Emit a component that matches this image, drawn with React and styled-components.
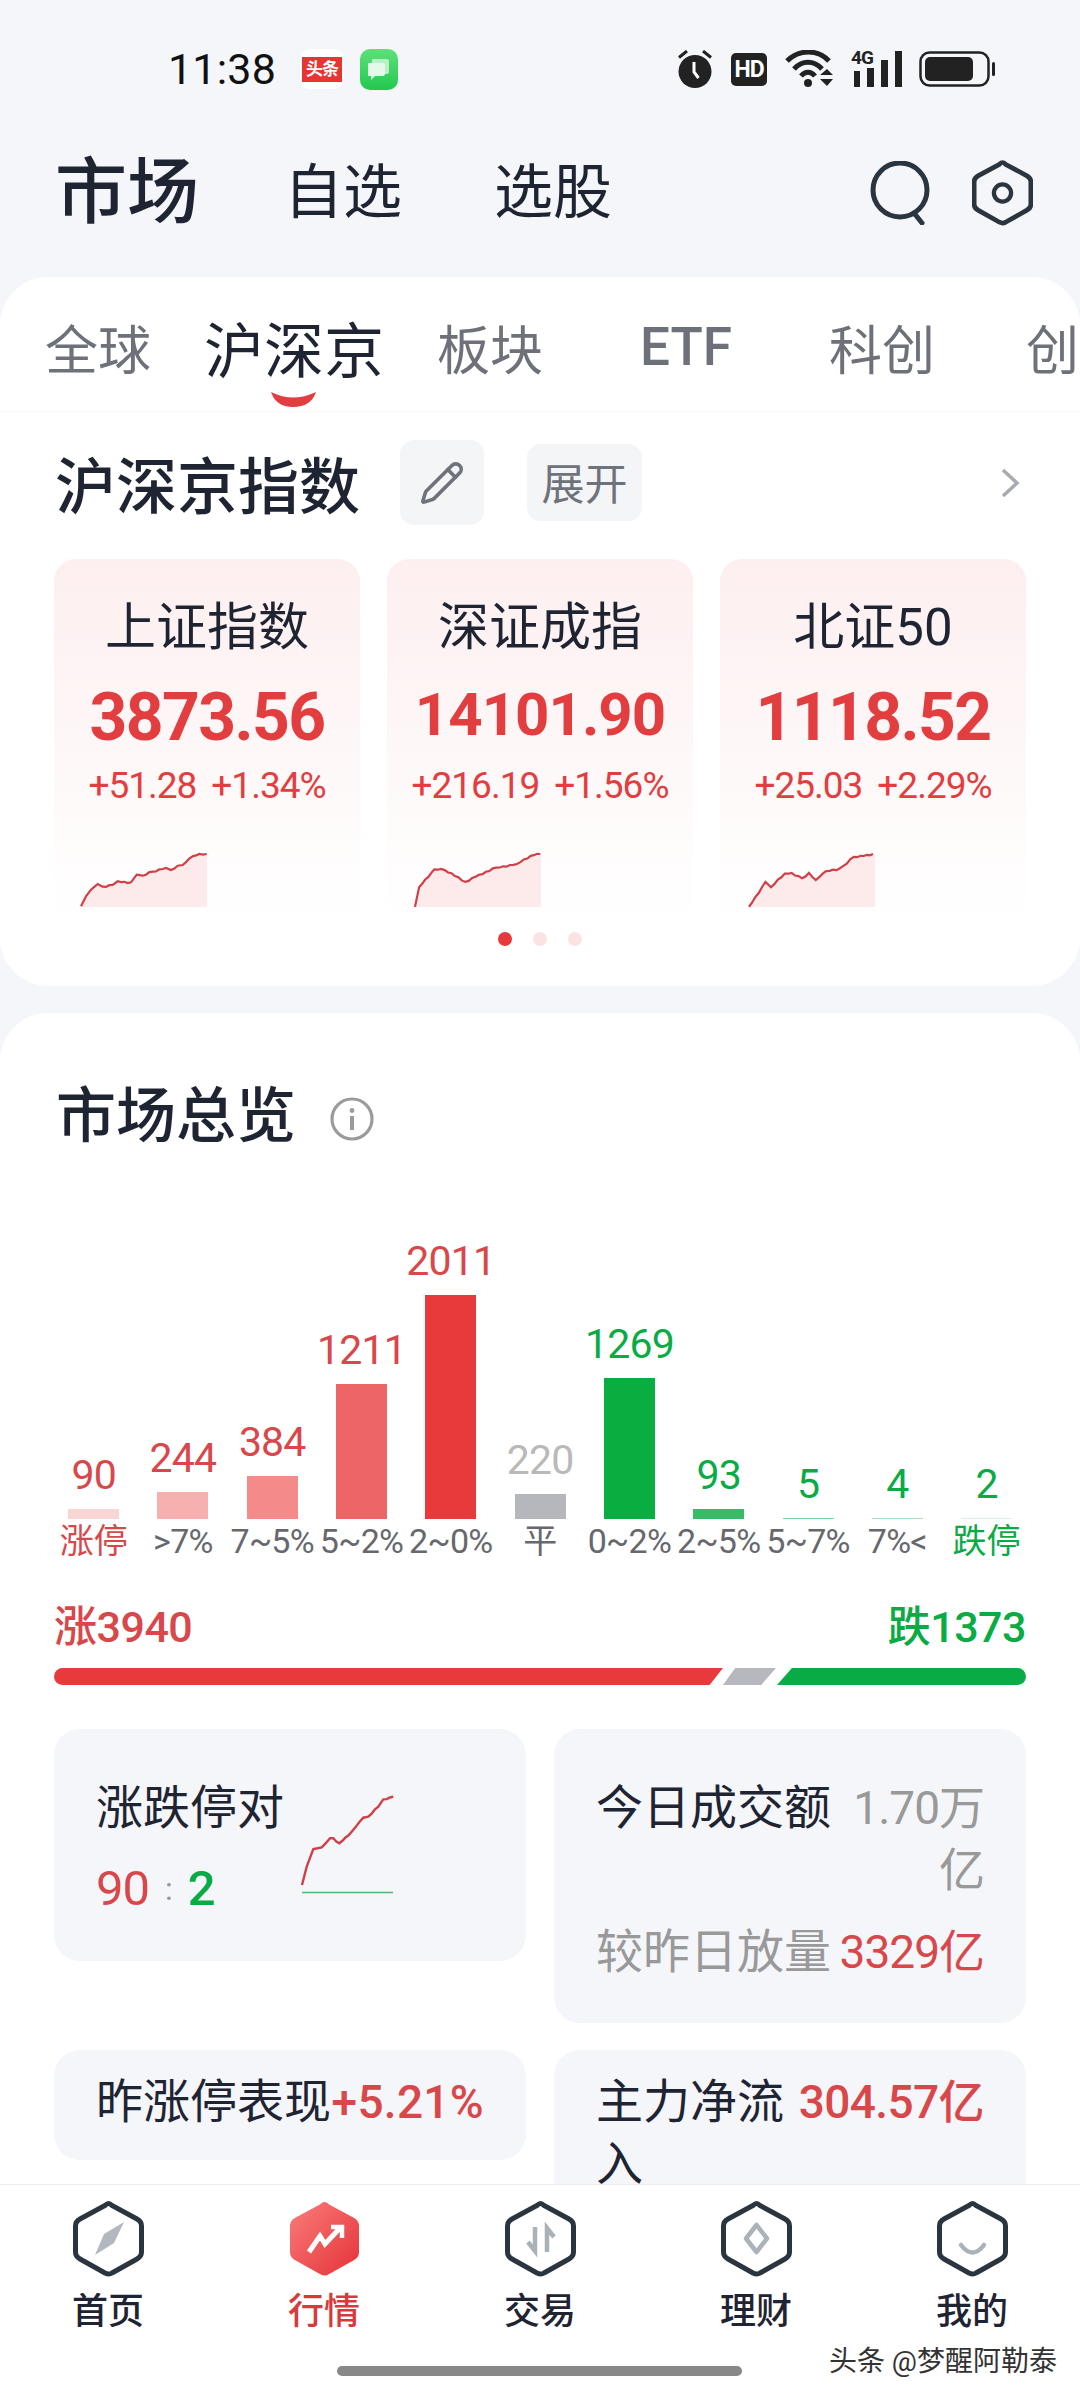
import React from "react";
import styled, { createGlobalStyle } from "styled-components";
import { Pencil } from "lucide-react";

const INK = "#1f2433";
const RED = "#e23d3f";
const GREEN = "#09ab45";
const SANS = `Roboto, "Noto Sans CJK SC", sans-serif`;

const Global = createGlobalStyle`
  html, body { margin: 0; padding: 0; background: #f4f6fa; }
  * { box-sizing: border-box; }
  body { font-family: ${SANS}; color: ${INK}; }
`;

const Page = styled.div`
  width: 1080px; height: 2400px; overflow: hidden; position: relative;
  background: #f4f6fa; display: flex; flex-direction: column;
`;

/* status bar */
const StatusBar = styled.div`
  height: 120px; padding: 18px 84px 0 168px; display: flex; align-items: center; flex-shrink: 0;
`;
const Clock = styled.span`
  font-size: 43px; line-height: 48px; color: #111; width: 107px; letter-spacing: 0.2px; white-space: nowrap;
`;
const TtBadge = styled.div`
  width: 44px; height: 40px; margin-left: 25px; background: #fff; border-radius: 10px;
  display: flex; align-items: center; justify-content: center;
`;
const TtText = styled.span`
  width: 40px; height: 25px; background: #e53535; color: #fff; font-size: 17px; line-height: 25px;
  font-weight: 700; text-align: center; letter-spacing: -1px; white-space: nowrap;
`;
const ChatBadge = styled.div`
  width: 38px; height: 41px; margin-left: 16px; border-radius: 10px;
  background: linear-gradient(180deg, #5fe07a, #22c84f);
  display: flex; align-items: center; justify-content: center;
`;
const StatusRight = styled.div`
  margin-left: auto; display: flex; align-items: center;
`;
const HdBox = styled.span`
  width: 36px; height: 33px; margin-left: 19px; background: #222; border-radius: 5px; color: #fff;
  font-size: 23px; line-height: 33px; font-weight: 700; text-align: center; letter-spacing: -1px;
`;
const SignalWrap = styled.div`
  position: relative; width: 52px; height: 36px; margin-left: 17px;
`;
const FourG = styled.span`
  position: absolute; left: 0; top: -4px; font-size: 19px; line-height: 22px; font-weight: 700; color: #222; letter-spacing: -1px;
`;
const BatteryIcon = styled.svg`
  margin-left: 16px; display: block;
`;
const WifiIcon = styled.svg`
  margin-left: 18px; display: block;
`;

/* header */
const Header = styled.div`
  height: 157px; padding: 0 47px 12px 55px; display: flex; align-items: center; flex-shrink: 0;
`;
const BrandTitle = styled.span`
  font-size: 72px; line-height: 80px; font-weight: 500; color: ${INK}; white-space: nowrap;
`;
const HeadLink = styled.span`
  font-size: 59px; line-height: 80px; color: ${INK}; white-space: nowrap; margin-left: ${(p) => p.$gap}px;
`;
const HeadIcons = styled.div`
  margin-left: auto; display: flex; align-items: center; gap: 40px;
`;

/* sheets */
const MarketSheet = styled.section`
  height: 709px; flex-shrink: 0; background: #fff; border-radius: 48px; overflow: hidden;
`;
const OverviewSheet = styled.section`
  flex: 1; min-height: 0; margin-top: 27px; background: #fff; border-radius: 48px 48px 0 0; overflow: hidden;
`;

/* tabs */
const Tabs = styled.div`
  height: 135px; padding-top: 5px; display: flex; overflow: hidden;
  border-bottom: 1px solid #fafafb;
`;
const Tab = styled.div`
  position: relative; width: 196px; flex-shrink: 0; display: flex; align-items: center;
  justify-content: ${(p) => (p.$lead ? "flex-start" : "center")};
  padding-left: ${(p) => (p.$lead ? 46 : 0)}px;
  font-size: ${(p) => (p.$active ? 60 : 53)}px;
  color: ${(p) => (p.$active ? INK : "#6e7179")};
  white-space: nowrap; font-weight: ${(p) => (p.$bold ? 500 : 400)};
`;
const Smile = styled.svg`
  position: absolute; left: 75px; bottom: 4px; display: block;
`;

/* section head */
const SectionHead = styled.div`
  margin-top: 28px; height: 85px; padding: 0 60px 0 55px; display: flex; align-items: flex-start;
`;
const SectionTitle = styled.h2`
  margin: 0; font-size: 61px; line-height: 97px; height: 85px; font-weight: 500; color: ${INK}; white-space: nowrap;
`;
const EditButton = styled.button`
  width: 84px; height: 85px; margin-left: 40px; border: 0; padding: 0; border-radius: 14px; background: #f4f5f7;
  display: flex; align-items: center; justify-content: center; color: #6e727a;
`;
const ExpandButton = styled.button`
  width: 115px; height: 77px; margin: 4px 0 0 43px; border: 0; padding: 0; border-radius: 14px; background: #f4f5f7;
  font-family: ${SANS}; font-size: 43px; line-height: 83px; color: #6e727a;
`;
const ChevronBox = styled.svg`
  margin: 28px 0 0 auto; display: block;
`;

/* index cards */
const CardRow = styled.div`
  margin-top: 34px; padding: 0 54px; display: grid; grid-template-columns: repeat(3, 306px); column-gap: 27px;
`;
const IndexCard = styled.div`
  height: 361px; border-radius: 22px 22px 0 0; display: flex; flex-direction: column; align-items: center;
  background: linear-gradient(180deg, #fdeff0 0%, #fef7f7 50%, #ffffff 100%);
`;
const IndexName = styled.div`
  margin-top: 39px; font-size: 51px; line-height: 60px; color: ${INK}; white-space: nowrap;
`;
const IndexValue = styled.div`
  margin-top: ${(p) => (p.$small ? 17 : 20)}px; font-size: ${(p) => (p.$small ? 60 : 66)}px; line-height: 80px; font-weight: 700; color: ${RED}; white-space: nowrap;
  letter-spacing: ${(p) => (p.$small ? -1 : -1.6)}px;
  margin-bottom: ${(p) => (p.$small ? 3 : 0)}px;
`;
const IndexChange = styled.div`
  margin-top: 6px; display: flex; gap: 15px; font-size: 37px; line-height: 44px; color: ${RED}; white-space: nowrap;
  letter-spacing: -1px;
`;
const Spark = styled.svg`
  display: block; align-self: flex-start; margin: 46px 0 0 ${(p) => p.$left}px; overflow: visible;
`;
const Dots = styled.div`
  margin-top: 12px; display: flex; justify-content: center; gap: 21px;
`;
const Dot = styled.span`
  width: 14px; height: 14px; border-radius: 50%; background: ${(p) => (p.$on ? "#e5393b" : "#fbe3e3")};
`;

/* overview */
const OverviewHead = styled.div`
  margin-top: 74px; height: 60px; padding-left: 56px; display: flex; align-items: center;
`;
const OverviewTitle = styled.h2`
  margin: 0; font-size: 60px; line-height: 60px; font-weight: 500; color: ${INK}; white-space: nowrap;
`;
const InfoIcon = styled.svg`
  margin: 4px 0 0 34px; display: block;
`;
const Chart = styled.div`
  padding-left: 49px; display: grid; grid-template-columns: repeat(11, 89.3px);
`;
const ChartCol = styled.div`
  display: flex; flex-direction: column; align-items: center;
`;
const BarArea = styled.div`
  height: 372px; display: flex; flex-direction: column; justify-content: flex-end; align-items: center;
`;
const BarValue = styled.span`
  font-size: 41px; line-height: 40px; margin-bottom: 14px; color: ${(p) => p.$c}; white-space: nowrap; letter-spacing: -0.8px;
`;
const Bar = styled.div`
  width: 51px; height: ${(p) => p.$h}px; background: ${(p) => p.$c};
`;
const BarLabel = styled.span`
  font-size: ${(p) => (p.$cjk ? 34 : 34)}px; line-height: 44px; color: ${(p) => p.$c}; white-space: nowrap; letter-spacing: ${(p) => (p.$cjk ? 0 : -0.7)}px;
`;
const Totals = styled.div`
  margin-top: 39px; padding: 0 54px; height: 50px; display: flex; justify-content: space-between;
`;
const TotalText = styled.span`
  font-size: 43px; line-height: 50px; font-weight: 500; color: ${(p) => p.$c}; letter-spacing: -0.5px;
`;
const Stack = styled.div`
  margin: 16px 54px 0; height: 17px; display: flex;
`;
const StackRed = styled.div`
  width: 669px; background: #e83a3c; border-radius: 9px 0 0 9px;
  clip-path: polygon(0 0, 100% 0, 98% 100%, 0 100%);
`;
const StackGray = styled.div`
  width: 53px; background: #b6b8be; margin-left: 0;
  clip-path: polygon(23% 0, 100% 0, 72% 100%, 0 100%);
`;
const StackGreen = styled.div`
  flex: 1; background: ${GREEN}; border-radius: 0 9px 9px 0; margin-left: 1px;
  clip-path: polygon(6% 0, 100% 0, 100% 100%, 0 100%);
`;
const TileGrid = styled.div`
  margin-top: 44px; padding: 0 55px 0 54px; display: grid; grid-template-columns: 472px 472px;
  column-gap: 28px; row-gap: 27px; align-items: start;
`;
const Tile = styled.div`
  background: #f4f6fa; border-radius: 26px; padding: ${(p) => p.$pad || "48px 42px 40px"};
`;
const TileSplit = styled.div`
  display: flex; align-items: flex-start;
`;
const TileCol = styled.div`
  width: 206px; flex-shrink: 0;
`;
const TileRow = styled.div`
  display: flex; margin-top: ${(p) => p.$mt || 0}px; justify-content: space-between;
`;
const TileLabel = styled.span`
  font-size: 47px; line-height: 62px; color: ${(p) => p.$c || INK}; flex-shrink: ${(p) => (p.$wrap ? 1 : 0)}; white-space: ${(p) => (p.$wrap ? "normal" : "nowrap")};
`;
const TileValue = styled.span`
  font-size: 46px; line-height: 62px; color: ${(p) => p.$c}; text-align: right; letter-spacing: ${(p) => p.$ls ?? -1}px;
  font-weight: ${(p) => p.$w || 400}; flex: ${(p) => (p.$nowrap ? "0 0 auto" : "1 1 0")}; white-space: ${(p) => (p.$nowrap ? "nowrap" : "normal")};
  min-width: 0;
`;
const Ratio = styled.div`
  margin-top: 19px; display: flex; align-items: center; height: 62px; font-size: 49px; line-height: 62px; letter-spacing: -1px;
`;
const RatioPart = styled.span`
  color: ${(p) => p.$c}; font-size: ${(p) => p.$s || 49}px; margin: 0 ${(p) => p.$m || 0}px; font-weight: ${(p) => p.$w || 400};
`;
const RatioSpark = styled.svg`
  display: block; margin-top: 18px; overflow: visible;
`;

/* nav */
const Nav = styled.nav`
  height: 216px; flex-shrink: 0; background: #fff; border-top: 1px solid #ececec; padding-top: 15px;
`;
const NavGrid = styled.div`
  display: grid; grid-template-columns: repeat(5, 216px);
`;
const NavItem = styled.div`
  display: flex; flex-direction: column; align-items: center;
`;
const NavLabel = styled.span`
  margin-top: 12px; font-size: 36px; line-height: 44px; font-weight: 500; color: ${(p) => (p.$active ? "#d8393c" : INK)}; white-space: nowrap;
`;
const HomeBar = styled.div`
  width: 405px; height: 10px; margin: 32px 0 0 337px; background: #888; border-radius: 5px;
`;
const Watermark = styled.span`
  position: absolute; right: 23px; bottom: 20px; font-size: 28px; line-height: 36px; color: #333; white-space: nowrap;
`;

const HEX = "M35.5 3.5Q37 3.5 39 5.5L64 19Q68.5 21.5 68.5 26V52Q68.5 56.5 64 59L39 73Q36 75 32 73L7 59Q2.5 56.5 2.5 52V26Q2.5 21.5 7 19L32 5.5Q34 3.5 35.5 3.5Z";

const NavHex = ({ children, filled }) => (
  <svg width="71" height="78" viewBox="0 0 71 78" style={{ display: "block" }}>
    <defs>
      <linearGradient id="hexfill" x1="0" y1="0" x2="1" y2="1">
        <stop offset="0" stopColor="#fa7b7b" />
        <stop offset="1" stopColor="#e53438" />
      </linearGradient>
    </defs>
    {filled ? <path d={HEX} fill="url(#hexfill)" stroke="url(#hexfill)" strokeWidth="3" /> : <path d={HEX} fill="none" stroke="#2b3540" strokeWidth="5" />}
    {children}
  </svg>
);

/* maps read-off trace points to chart space and adds fine tick-level wiggle */
const mapPts = (raw, x0, y0, sx, sy, wiggle = 0.9) => {
  const out = [];
  raw.forEach(([x, y], i) => {
    const px = (x - x0) / sx;
    const py = (y - y0) / sy;
    if (i > 0) {
      const [qx, qy] = raw[i - 1];
      const ax = (qx - x0) / sx;
      const ay = (qy - y0) / sy;
      const n = Math.max(1, Math.floor((px - ax) / 3));
      for (let k = 1; k < n; k++) {
        const t = k / n;
        const j = (k % 2 ? 1 : -1) * wiggle * (0.5 + 0.5 * Math.sin(k * 2.3 + i));
        out.push(`${(ax + (px - ax) * t).toFixed(1)},${(ay + (py - ay) * t + j).toFixed(1)}`);
      }
    }
    out.push(`${px.toFixed(1)},${py.toFixed(1)}`);
  });
  return out.join(" ");
};

const SPARKS = [
  { left: 27, pts: mapPts([[95,322],[110,292],[125,272],[145,255],[160,263],[190,258],[205,247],[245,250],[262,227],[280,230],[310,218],[350,207],[365,213],[385,200],[400,198],[430,172],[450,165],[472,165]], 95, 165, 3, 3) },
  { left: 28, pts: mapPts([[602,1365],[608,1310],[630,1260],[645,1262],[675,1295],[695,1275],[720,1255],[750,1245],[770,1222],[784,1217]], 602, 1217, 1.452, 2.8) },
  { left: 29, pts: mapPts([[1088,1365],[1112,1295],[1120,1310],[1140,1272],[1150,1270],[1165,1285],[1175,1270],[1185,1290],[1200,1265],[1215,1262],[1225,1250],[1240,1225],[1250,1222],[1268,1217]], 1088, 1217, 1.452, 2.8) },
];

const CARDS = [
  { name: "上证指数", value: "3873.56", a: "+51.28", b: "+1.34%" },
  { name: "深证成指", value: "14101.90", a: "+216.19", b: "+1.56%", small: true },
  { name: "北证50", value: "1118.52", a: "+25.03", b: "+2.29%" },
];

const VRED = "#d8474a";
const GRAY = "#66686e";
const COLS = [
  { v: "90", l: "涨停", h: 10, c: "#f8d6d6", vc: VRED, lc: VRED, cjk: true },
  { v: "244", l: ">7%", h: 27, c: "#f7b0b0", vc: VRED, lc: GRAY },
  { v: "384", l: "7~5%", h: 43, c: "#f58a8a", vc: VRED, lc: GRAY },
  { v: "1211", l: "5~2%", h: 135, c: "#ee6565", vc: VRED, lc: GRAY },
  { v: "2011", l: "2~0%", h: 224, c: "#e93a3b", vc: VRED, lc: GRAY },
  { v: "220", l: "平", h: 25, c: "#b5b7bd", vc: "#b9b9b9", lc: GRAY, cjk: true },
  { v: "1269", l: "0~2%", h: 141, c: "#09ad40", vc: GREEN, lc: GRAY },
  { v: "93", l: "2~5%", h: 10, c: "#38bb66", vc: GREEN, lc: GRAY },
  { v: "5", l: "5~7%", h: 1, c: "#7fd4a0", vc: GREEN, lc: GRAY },
  { v: "4", l: "7%<", h: 1, c: "#a6e0bd", vc: GREEN, lc: GRAY },
  { v: "2", l: "跌停", h: 1, c: "#d8f2e2", vc: GREEN, lc: GREEN, cjk: true },
];

const TABS = [
  { t: "全球" }, { t: "沪深京", active: true }, { t: "板块" }, { t: "ETF", bold: true }, { t: "科创" }, { t: "创", lead: true },
];

export default function App() {
  return (
    <Page>
      <Global />
      <StatusBar>
        <Clock>11:38</Clock>
        <TtBadge><TtText>头条</TtText></TtBadge>
        <ChatBadge>
          <svg width="26" height="26" viewBox="0 0 26 26">
            <path d="M6 3h15a2 2 0 0 1 2 2v11a2 2 0 0 1-2 2H6z" fill="#b9f0c4" />
            <path d="M3 7h14a2 2 0 0 1 2 2v9a2 2 0 0 1-2 2H9l-4 4v-4H3a1 1 0 0 1-1-1V8a1 1 0 0 1 1-1z" fill="#e4f9e8" />
          </svg>
        </ChatBadge>
        <StatusRight>
          <svg width="34" height="38" viewBox="0 0 34 38" style={{ display: "block" }}>
            <circle cx="17" cy="21.5" r="16.5" fill="#222" />
            <path d="M16 12v10l4.5 6" fill="none" stroke="#fff" strokeWidth="3" />
            <path d="M1 7.5 9 1M33 7.5 25 1" stroke="#222" strokeWidth="3" fill="none" />
          </svg>
          <HdBox>HD</HdBox>
          <WifiIcon width="49" height="38" viewBox="0 0 49 38">
            <path d="M2 11C14 -1 33 -1 44 11" fill="none" stroke="#222" strokeWidth="5" />
            <path d="M9 19C17 10 29 10 37 19" fill="none" stroke="#222" strokeWidth="5" />
            <path d="M16 26C20 21 26 21 30 26" fill="none" stroke="#222" strokeWidth="5" />
            <circle cx="23" cy="33" r="4" fill="#222" />
            <path d="M35 25 42 19 48 25zM35 29 48 29 42 36z" fill="#222" />
          </WifiIcon>
          <SignalWrap>
            <FourG>4G</FourG>
            <svg width="52" height="36" viewBox="0 0 52 36" style={{ display: "block" }}>
              <rect x="3" y="20" width="6" height="16" fill="#222" />
              <rect x="16" y="17" width="7" height="19" fill="#222" />
              <rect x="30" y="9" width="7" height="27" fill="#222" />
              <rect x="44" y="0" width="7" height="36" fill="#222" />
            </svg>
          </SignalWrap>
          <BatteryIcon width="77" height="36" viewBox="0 0 77 36">
            <rect x="1.5" y="1.5" width="68" height="33" rx="9" fill="none" stroke="#222" strokeWidth="2.5" />
            <rect x="6" y="6" width="48" height="24" rx="5" fill="#222" />
            <rect x="73" y="11" width="3" height="14" rx="1.5" fill="#222" />
          </BatteryIcon>
        </StatusRight>
      </StatusBar>

      <Header>
        <BrandTitle>市场</BrandTitle>
        <HeadLink $gap={85}>自选</HeadLink>
        <HeadLink $gap={92}>选股</HeadLink>
        <HeadIcons>
          <svg width="62" height="64" viewBox="0 0 62 64" style={{ display: "block" }}>
            <ellipse cx="30" cy="29" rx="27" ry="27" fill="none" stroke="#2b3540" strokeWidth="5" />
            <path d="M44 52 52 62" fill="none" stroke="#2b3540" strokeWidth="5" strokeLinecap="round" />
          </svg>
          <svg width="61" height="68" viewBox="0 0 71 78" style={{ display: "block" }}>
            <path d={HEX} fill="none" stroke="#2b3540" strokeWidth="5.5" />
            <circle cx="35.5" cy="39" r="10" fill="none" stroke="#2b3540" strokeWidth="5" />
          </svg>
        </HeadIcons>
      </Header>

      <MarketSheet>
        <Tabs>
          {TABS.map((x) => (
            <Tab key={x.t} $active={x.active} $bold={x.bold} $lead={x.lead}>
              {x.t}
              {x.active && (
                <Smile width="45" height="15" viewBox="0 0 45 15">
                  <path d="M0 0Q22 11 45 0Q40 15 22 15Q5 15 0 0Z" fill="#e23d3f" />
                </Smile>
              )}
            </Tab>
          ))}
        </Tabs>
        <SectionHead>
          <SectionTitle>沪深京指数</SectionTitle>
          <EditButton aria-label="edit"><Pencil size={46} strokeWidth={1.9} /></EditButton>
          <ExpandButton>展开</ExpandButton>
          <ChevronBox width="20" height="30" viewBox="0 0 20 30">
            <path d="M3 2 17 15 3 28" fill="none" stroke="#a8abb0" strokeWidth="3.5" />
          </ChevronBox>
        </SectionHead>
        <CardRow>
          {CARDS.map((c, i) => (
            <IndexCard key={c.name}>
              <IndexName>{c.name}</IndexName>
              <IndexValue $small={c.small}>{c.value}</IndexValue>
              <IndexChange><span>{c.a}</span><span>{c.b}</span></IndexChange>
              <Spark $left={SPARKS[i].left} width="126" height="53" viewBox="0 0 126 53">
                <polygon points={`0,53 ${SPARKS[i].pts} 126,0 126,53`} fill="#fdeaea" />
                <polyline points={SPARKS[i].pts} fill="none" stroke="#cf4048" strokeWidth="2.2" />
              </Spark>
            </IndexCard>
          ))}
        </CardRow>
        <Dots><Dot $on /><Dot /><Dot /></Dots>
      </MarketSheet>

      <OverviewSheet>
        <OverviewHead>
          <OverviewTitle>市场总览</OverviewTitle>
          <InfoIcon width="44" height="44" viewBox="0 0 44 44">
            <circle cx="22" cy="22" r="20" fill="none" stroke="#9b9b9b" strokeWidth="3.2" />
            <circle cx="22" cy="13.5" r="2.4" fill="#9b9b9b" />
            <rect x="20" y="19" width="4" height="14" fill="#9b9b9b" />
          </InfoIcon>
        </OverviewHead>
        <Chart>
          {COLS.map((c) => (
            <ChartCol key={c.l}>
              <BarArea>
                <BarValue $c={c.vc}>{c.v}</BarValue>
                <Bar $h={c.h} $c={c.c} />
              </BarArea>
              <BarLabel $c={c.lc} $cjk={c.cjk}>{c.l}</BarLabel>
            </ChartCol>
          ))}
        </Chart>
        <Totals>
          <TotalText $c={VRED}>涨3940</TotalText>
          <TotalText $c={GREEN}>跌1373</TotalText>
        </Totals>
        <Stack><StackRed /><StackGray /><StackGreen /></Stack>
        <TileGrid>
          <Tile $pad="48px 42px 41px">
            <TileSplit>
              <TileCol>
                <TileLabel>涨跌停对</TileLabel>
                <Ratio>
                  <RatioPart $c={VRED}>90</RatioPart>
                  <RatioPart $c="#999" $s={32} $m={16}>:</RatioPart>
                  <RatioPart $c={GREEN} $w={500}>2</RatioPart>
                </Ratio>
              </TileCol>
              <RatioSpark width="92" height="98" viewBox="0 0 92 98">
                <polyline points={mapPts([[66,345],[80,290],[100,237],[125,232],[150,205],[160,205],[178,220],[215,185],[250,143],[265,140],[295,110],[310,88],[340,80]], 66, 75, 3, 3, 0.7)} fill="none" stroke="#cf4048" strokeWidth="2.4" />
                <path d="M0 97.5H91" stroke="#4fb878" strokeWidth="1.6" />
              </RatioSpark>
            </TileSplit>
          </Tile>
          <Tile>
            <TileRow>
              <TileLabel>今日成交额</TileLabel>
              <TileValue $c="#999">1.70万亿</TileValue>
            </TileRow>
            <TileRow $mt={20}>
              <TileLabel $c="#999">较昨日放量</TileLabel>
              <TileValue $c={VRED} $nowrap>3329亿</TileValue>
            </TileRow>
          </Tile>
          <Tile $pad="21px 42px 27px">
            <TileRow>
              <TileLabel>昨涨停表现</TileLabel>
              <TileValue $c={VRED} $nowrap $w={500} $ls={0.3}>+5.21%</TileValue>
            </TileRow>
          </Tile>
          <Tile $pad="21px 42px 27px">
            <TileRow>
              <TileLabel $wrap>主力净流入</TileLabel>
              <TileValue $c={VRED} $nowrap $w={500} $ls={-0.6}>304.57亿</TileValue>
            </TileRow>
          </Tile>
        </TileGrid>
      </OverviewSheet>

      <Nav>
        <NavGrid>
          <NavItem>
            <NavHex><path d="M51 22 41 43 22 55 31 34Z" fill="#b2b8c0" /></NavHex>
            <NavLabel>首页</NavLabel>
          </NavItem>
          <NavItem>
            <NavHex filled>
              <path d="M20 52 31 36 36 44 51 28" fill="none" stroke="#fff" strokeWidth="5" />
              <path d="M42 27H53V38" fill="none" stroke="#fff" strokeWidth="4.5" />
            </NavHex>
            <NavLabel $active>行情</NavLabel>
          </NavItem>
          <NavItem>
            <NavHex>
              <path d="M30 27V51L23 42" fill="none" stroke="#a9b1b9" strokeWidth="4.5" />
              <path d="M42 52V28L49 37" fill="none" stroke="#a9b1b9" strokeWidth="4.5" />
            </NavHex>
            <NavLabel>交易</NavLabel>
          </NavItem>
          <NavItem>
            <NavHex><path d="M35.5 25 46 38.5 35.5 52 25 38.5Z" fill="none" stroke="#aab2ba" strokeWidth="4.5" strokeLinejoin="round" /></NavHex>
            <NavLabel>理财</NavLabel>
          </NavItem>
          <NavItem>
            <NavHex><path d="M24 45Q35.5 60 47 45" fill="none" stroke="#aab2ba" strokeWidth="4.5" strokeLinecap="round" /></NavHex>
            <NavLabel>我的</NavLabel>
          </NavItem>
        </NavGrid>
        <HomeBar />
      </Nav>
      <Watermark>头条 @梦醒阿勒泰</Watermark>
    </Page>
  );
}
